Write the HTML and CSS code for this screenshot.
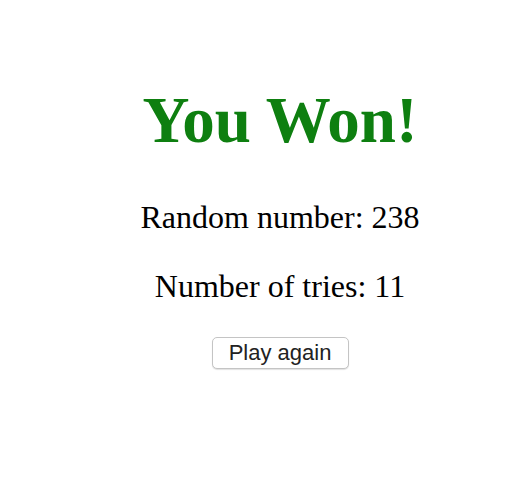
FILE: index.html
```html
<!DOCTYPE html>
<html>
<head>
<meta charset="utf-8">
<link rel="stylesheet" href="styles.css">
</head>
<body>
<main class="game">
  <h1 class="title">You Won!</h1>
  <p class="stat">Random number: 238</p>
  <p class="stat">Number of tries: 11</p>
  <button class="again">Play again</button>
</main>
</body>
</html>
```
FILE: styles.css
```css
html, body {
  margin: 0;
  background: #ffffff;
}
body {
  padding: 8px;
  font-family: "Liberation Serif", "Times New Roman", serif;
  color: #000;
}
.game {
  display: flex;
  flex-direction: column;
  align-items: center;
  padding-left: 30px;
  padding-top: 72px;
}
.title {
  margin: 0;
  font-size: 65px;
  line-height: 80px;
  font-weight: bold;
  color: #0e7f10;
}
.stat {
  margin: 0;
  font-size: 32px;
  line-height: 36px;
}
.title + .stat {
  margin-top: 39px;
}
.stat + .stat {
  margin-top: 33px;
}
.again {
  margin-top: 33px;
  font-family: "Liberation Sans", Arial, sans-serif;
  font-size: 22px;
  color: #222;
  background: #fff;
  border: 1px solid #c4c4c4;
  border-radius: 5px;
  box-shadow: 0 1px 1px rgba(0,0,0,0.12);
  height: 32px;
  width: 137px;
  padding: 0;
}
```
